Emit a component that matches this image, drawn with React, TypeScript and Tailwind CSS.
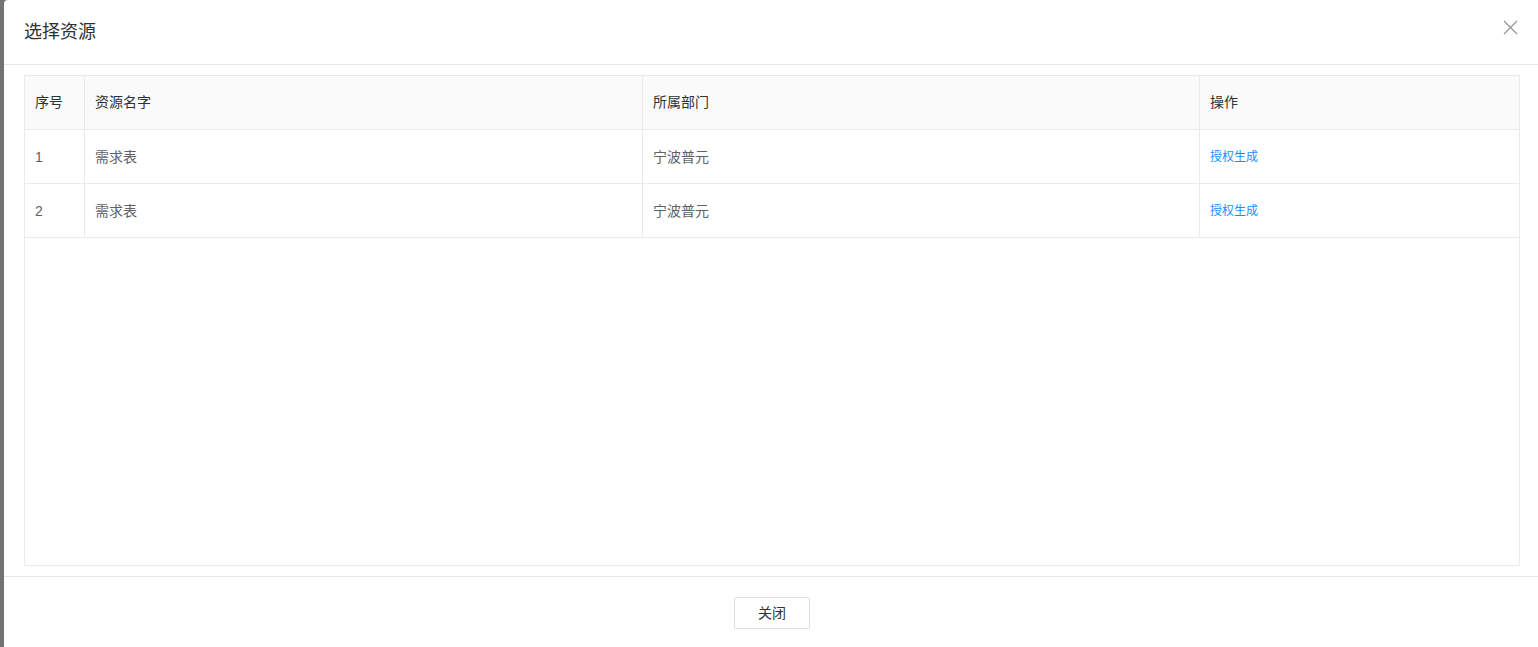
import React from 'react';

interface ResourceRow {
  id: number;
  name: string;
  dept: string;
}

const rows: ResourceRow[] = [
  { id: 1, name: '需求表', dept: '宁波普元' },
  { id: 2, name: '需求表', dept: '宁波普元' },
];

const cols = 'grid grid-cols-[60px_558px_557px_1fr]';

const App: React.FC = () => {
  return (
    <div className="flex h-[647px] w-full overflow-hidden bg-[#737373] font-['Liberation_Sans','Noto_Sans_CJK_SC',sans-serif]">
      <div className="w-[4px] shrink-0" />
      <div className="flex w-[1536px] shrink-0 flex-col rounded-tl-[4px] bg-white">
        {/* header */}
        <div className="flex h-[65px] shrink-0 items-center justify-between border-b border-[#e8e8e8] pl-[20px] pr-[22px]">
          <span className="text-[18px] text-[#303133]">选择资源</span>
          <button type="button" className="-mt-[10px] text-[#909399]">
            <svg width="15" height="15" viewBox="0 0 15 15" fill="none" stroke="currentColor" strokeWidth="1.2">
              <path d="M1 1L14 14M14 1L1 14" />
            </svg>
          </button>
        </div>

        {/* body */}
        <div className="px-[20px] pt-[10px] pb-[10px]">
          <div className="h-[491px] border border-[#e8eaf0]">
            <div className={`${cols} h-[54px] border-b border-[#e8eaf0] bg-[#fafafa] text-[14px] text-[#303133]`}>
              <div className="flex items-center border-r border-[#e8eaf0] pl-[10px]">序号</div>
              <div className="flex items-center border-r border-[#e8eaf0] pl-[10px]">资源名字</div>
              <div className="flex items-center border-r border-[#e8eaf0] pl-[10px]">所属部门</div>
              <div className="flex items-center pl-[10px]">操作</div>
            </div>
            {rows.map((r) => (
              <div key={r.id} className={`${cols} h-[54px] border-b border-[#e8eaf0] text-[14px] text-[#606266]`}>
                <div className="flex items-center border-r border-[#e8eaf0] pl-[10px] pt-[1px]">{r.id}</div>
                <div className="flex items-center border-r border-[#e8eaf0] pl-[10px] pt-[1px]">{r.name}</div>
                <div className="flex items-center border-r border-[#e8eaf0] pl-[10px] pt-[1px]">{r.dept}</div>
                <div className="flex items-center pl-[10px] pt-[1px]">
                  <a className="cursor-pointer text-[12px] text-[#1890ff]">授权生成</a>
                </div>
              </div>
            ))}
          </div>
        </div>

        {/* footer */}
        <div className="flex flex-1 justify-center border-t border-[#e8e8e8] pt-[20px]">
          <button
            type="button"
            className="h-[32px] w-[76px] rounded-[2px] border border-[#dcdfe6] bg-white text-[14px] text-[#303133]"
          >
            关闭
          </button>
        </div>
      </div>
    </div>
  );
};

export default App;
